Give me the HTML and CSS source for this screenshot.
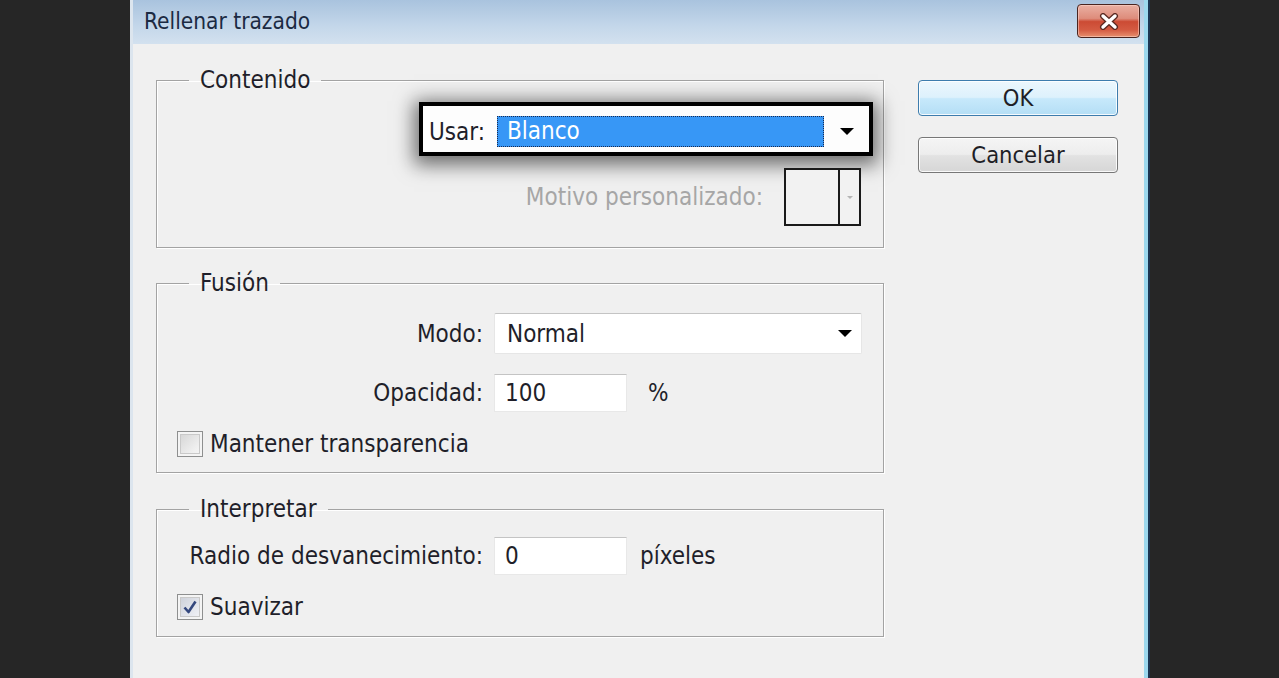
FILE: index.html
```html
<!DOCTYPE html>
<html lang="es">
<head>
<meta charset="utf-8">
<title>Rellenar trazado</title>
<link rel="stylesheet" href="styles.css">
</head>
<body>
<div class="window">
  <div class="titlebar">
    <span class="title">Rellenar trazado</span>
    <button class="close" aria-label="Cerrar">
      <svg width="20" height="17" viewBox="0 0 20 17">
        <path d="M4 3 L16 14 M16 3 L4 14" stroke="#5a2a22" stroke-width="6" stroke-linecap="round" fill="none"/>
        <path d="M4 3 L16 14 M16 3 L4 14" stroke="#ffffff" stroke-width="3.4" stroke-linecap="round" fill="none"/>
      </svg>
    </button>
  </div>
  <div class="client">
    <div class="groups">
      <fieldset class="group g-content">
        <legend>Contenido</legend>
        <div class="usar-hl">
          <span class="usar-lbl">Usar:</span>
          <span class="sel-blue">Blanco</span>
          <span class="arrow"></span>
        </div>
        <div class="motivo-row">
          <span class="disabled">Motivo personalizado:</span>
          <span class="pattern"><span class="pat-swatch"></span><span class="pat-btn"><span class="arrow arrow-small"></span></span></span>
        </div>
      </fieldset>

      <fieldset class="group g-fusion">
        <legend>Fusión</legend>
        <div class="row row-modo">
          <span class="lbl">Modo:</span>
          <span class="select">Normal<span class="arrow"></span></span>
        </div>
        <div class="row row-opac">
          <span class="lbl">Opacidad:</span>
          <span class="input">100</span>
          <span class="unit unit-pct">%</span>
        </div>
        <label class="check-row">
          <span class="checkbox"></span>
          <span>Mantener transparencia</span>
        </label>
      </fieldset>

      <fieldset class="group g-interp">
        <legend>Interpretar</legend>
        <div class="row row-radio">
          <span class="lbl">Radio de desvanecimiento:</span>
          <span class="input">0</span>
          <span class="unit unit-px">píxeles</span>
        </div>
        <label class="check-row check-suav">
          <span class="checkbox checked">
            <svg width="18" height="18" viewBox="0 0 18 18"><path d="M3.5 9.5 L7.5 14 L14.5 3.5" stroke="#34487e" stroke-width="2.6" fill="none" stroke-linejoin="round"/></svg>
          </span>
          <span>Suavizar</span>
        </label>
      </fieldset>
    </div>

    <div class="buttons">
      <button class="btn btn-ok">OK</button>
      <button class="btn btn-cancel">Cancelar</button>
    </div>
  </div>
</div>
</body>
</html>
```

FILE: styles.css
```css
html, body {
  margin: 0;
  padding: 0;
}
body {
  width: 1279px;
  height: 678px;
  overflow: hidden;
  background: #262626;
  font-family: "DejaVu Sans Condensed", "DejaVu Sans", sans-serif;
  font-stretch: condensed;
  color: #1f1f2a;
}
.window {
  margin-left: 130px;
  width: 1011px;
  height: 678px;
  display: flex;
  flex-direction: column;
  border-left: 3px solid #dce5ee;
  border-right: 4px solid #9cd8ee;
  box-shadow: 2px 0 0 #1c3552;
}
.titlebar {
  height: 44px;
  flex: none;
  display: flex;
  justify-content: space-between;
  align-items: flex-start;
  background: linear-gradient(#a9c3de, #c4d7ea 60%, #d3e1ef);
}
.title {
  padding-left: 11px;
  line-height: 42px;
  font-size: 22.5px;
  color: #1b2a42;
}
.close {
  margin: 4px 4px 0 0;
  width: 63px;
  height: 34px;
  padding: 0;
  display: flex;
  align-items: center;
  justify-content: center;
  border: 1px solid #4a2520;
  border-radius: 4px;
  background: linear-gradient(#eab0a3 0%, #de8c7b 42%, #cc4b34 52%, #d45b42 78%, #e7906f 100%);
  box-shadow: inset 0 0 0 1px rgba(255, 220, 210, 0.5);
}
.client {
  flex: 1;
  background: #f0f0f0;
  display: flex;
  align-items: flex-start;
  padding: 24px 23px 0 23px;
}
.groups {
  width: 728px;
  display: flex;
  flex-direction: column;
}
.group {
  margin: 0;
  padding: 0;
  min-width: 0;
  border: 1px solid #a3a3a3;
  box-shadow: inset 1px 1px 0 #ffffff, 1px 1px 0 #ffffff;
}
.group legend {
  margin-left: 32px;
  padding: 0 11px;
  font-size: 24px;
  line-height: 24px;
  color: #1f1f2a;
}
.g-content { padding-bottom: 21px; }
.g-fusion { margin-top: 23px; padding-bottom: 15px; }
.g-interp { margin-top: 24px; padding-bottom: 16px; }

/* Usar highlight */
.usar-hl {
  margin: 10px 0 0 262px;
  width: 454px;
  height: 54px;
  box-sizing: border-box;
  border: 4px solid #000;
  background: #fdfdfd;
  box-shadow: 0 4px 18px 5px rgba(0, 0, 0, 0.55);
  display: flex;
  align-items: center;
  padding: 5px 0 0 6px;
  font-size: 24px;
}
.usar-lbl {
  width: 68px;
  flex: none;
}
.sel-blue {
  width: 327px;
  height: 31px;
  box-sizing: border-box;
  flex: none;
  background: #3797f6;
  border: 1px dotted #1a2a50;
  color: #ffffff;
  padding-left: 9px;
  line-height: 29px;
}
.arrow {
  display: inline-block;
  width: 0;
  height: 0;
  border-left: 7px solid transparent;
  border-right: 7px solid transparent;
  border-top: 7px solid #000;
}
.usar-hl .arrow { margin-left: 16px; }

.motivo-row {
  margin-top: 12px;
  height: 58px;
  display: flex;
  align-items: center;
  justify-content: flex-end;
  padding-right: 22px;
  font-size: 24px;
}
.disabled { color: #a6a6a6; }
.pattern {
  margin-left: 21px;
  width: 77px;
  height: 58px;
  box-sizing: border-box;
  border: 2px solid #1a1a1a;
  display: flex;
  background: #f2f2f2;
}
.pat-swatch {
  width: 52px;
  border-right: 2px solid #1a1a1a;
}
.pat-btn {
  flex: 1;
  display: flex;
  align-items: center;
  justify-content: center;
}
.arrow-small {
  border-left-width: 3px;
  border-right-width: 3px;
  border-top: 3px solid #b5b5b5;
}

/* Rows */
.row {
  display: flex;
  align-items: center;
  font-size: 24px;
}
.lbl {
  width: 326px;
  margin-right: 11px;
  text-align: right;
  flex: none;
  white-space: nowrap;
}
.row-modo { margin-top: 18px; height: 41px; }
.row-opac { margin-top: 20px; height: 38px; }
.row-radio { margin-top: 16px; height: 38px; }
.select {
  width: 368px;
  height: 41px;
  box-sizing: border-box;
  background: #ffffff;
  border: 1px solid #e6e6e6;
  border-top-color: #c4c4c4;
  border-radius: 2px;
  display: flex;
  align-items: center;
  justify-content: space-between;
  padding: 0 9px 0 12px;
  color: #1f1f2a;
}
.input {
  width: 133px;
  height: 38px;
  box-sizing: border-box;
  background: #ffffff;
  border: 1px solid #e8e8e8;
  border-top-color: #c4c4c4;
  padding-left: 10px;
  line-height: 36px;
}
.unit-pct { margin-left: 21px; }
.unit-px { margin-left: 13px; }

.check-row {
  display: flex;
  align-items: center;
  margin: 18px 0 0 20px;
  height: 27px;
  font-size: 24px;
}
.check-suav { margin-top: 19px; height: 26px; }
.checkbox {
  width: 26px;
  height: 26px;
  box-sizing: border-box;
  margin-right: 7px;
  border: 1px solid #8e8f8f;
  background: linear-gradient(135deg, #d2d2d2, #efefef 70%, #f7f7f7);
  box-shadow: inset 0 0 0 2px #f4f4f4, inset 0 0 0 3px #c9c9c9;
  display: flex;
  align-items: center;
  justify-content: center;
  flex: none;
}
.checkbox.checked {
  background: linear-gradient(135deg, #c9cdd6, #e8eaf0 70%, #f5f5f7);
}

/* Buttons */
.buttons {
  margin: 12px 0 0 34px;
  width: 200px;
  display: flex;
  flex-direction: column;
  gap: 21px;
}
.btn {
  height: 36px;
  width: 200px;
  padding: 0;
  font-family: "DejaVu Sans Condensed", "DejaVu Sans", sans-serif;
  font-stretch: condensed;
  font-size: 23.5px;
  color: #1e1e26;
  border-radius: 4px;
  box-shadow: inset 0 0 0 1px rgba(255, 255, 255, 0.85);
}
.btn-ok {
  border: 1px solid #3d7cad;
  background: linear-gradient(#ecf7fd 0%, #ddf1fc 48%, #c7e9fb 52%, #b4def5 100%);
}
.btn-cancel {
  border: 1px solid #777777;
  background: linear-gradient(#f5f5f5 0%, #ededed 48%, #e2e2e2 52%, #d6d6d6 100%);
}
```
